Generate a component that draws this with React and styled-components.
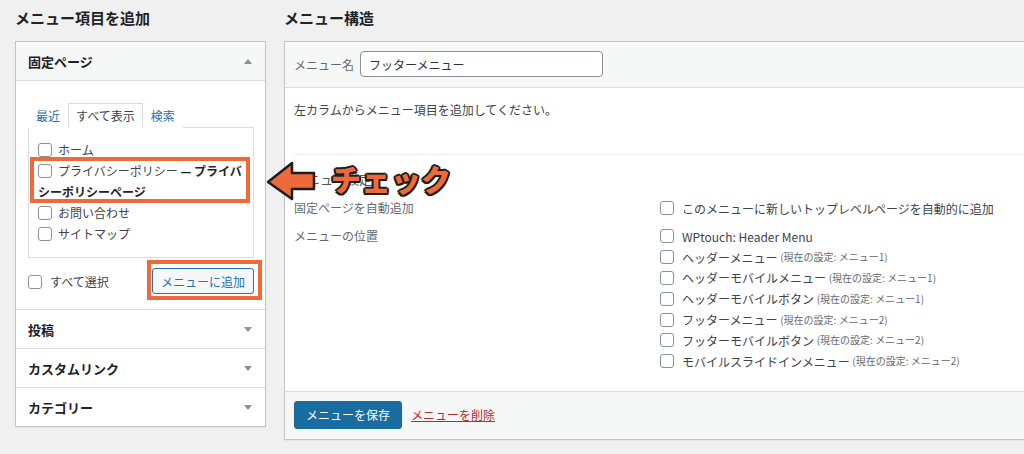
import React from "react";
import styled, { createGlobalStyle } from "styled-components";

const GlobalStyle = createGlobalStyle`
  body {
    margin: 0;
    background: #f0f0f1;
    font-family: "Noto Sans CJK JP", "Noto Sans", sans-serif;
    color: #3c434a;
    overflow: hidden;
  }
`;

const Page = styled.div`
  position: relative;
  display: flex;
  gap: 18px;
  width: 1024px;
  height: 454px;
  padding-left: 15px;
  box-sizing: border-box;
  overflow: hidden;
`;

const Column = styled.div`
  flex: 0 0 ${(p) => p.width}px;
  display: flex;
  flex-direction: column;
`;

const Heading = styled.h2`
  margin: 0;
  height: 41px;
  line-height: 36px;
  font-size: 15px;
  font-weight: 700;
  color: #1d2327;
`;

const Panel = styled.div`
  background: #fff;
  border: 1px solid #c3c4c7;
  box-shadow: 0 1px 1px rgba(0, 0, 0, 0.04);
`;

const AccordionHead = styled.div`
  display: flex;
  align-items: center;
  justify-content: space-between;
  height: 38px;
  padding: 0 13px 0 12px;
  background: ${(p) => (p.open ? "#f6f7f7" : "#fff")};
  border-top: ${(p) => (p.first ? "none" : "1px solid #dcdcde")};
  border-bottom: ${(p) => (p.open ? "1px solid #dcdcde" : "none")};
  font-size: 13px;
  font-weight: 700;
  color: #1d2327;
`;

const Caret = styled.span`
  width: 0;
  height: 0;
  border-left: 4px solid transparent;
  border-right: 4px solid transparent;
  ${(p) =>
    p.up
      ? "border-bottom: 5px solid #8c8f94;"
      : "border-top: 5px solid #8c8f94;"}
`;

const AccordionBody = styled.div`
  padding: 22px 11px 15px 12px;
`;

const Tabs = styled.div`
  display: flex;
  align-items: flex-end;
  position: relative;
  z-index: 1;
  margin-bottom: -1px;
`;

const Tab = styled.span`
  height: 23px;
  line-height: 23px;
  padding: 0 7px;
  font-size: 12px;
  color: ${(p) => (p.active ? "#3c434a" : "#2271b1")};
  border: 1px solid ${(p) => (p.active ? "#dcdcde" : "transparent")};
  border-bottom-color: ${(p) => (p.active ? "#fff" : "transparent")};
  background: #fff;
`;

const TabPanel = styled.div`
  border: 1px solid #dcdcde;
  padding: 11px 9px 13px;
`;

const Item = styled.label`
  display: block;
  line-height: 21px;
  font-size: 12px;
  color: #3c434a;
`;

const Box = styled.input.attrs({ type: "checkbox" })`
  appearance: none;
  width: 14px;
  height: 14px;
  margin: 0 ${(p) => p.$gap || 6}px 0 0;
  border: 1px solid #8c8f94;
  border-radius: 3px;
  background: #fff;
  vertical-align: -2px;
  box-sizing: border-box;
`;

const PostState = styled.b`
  color: #1d2327;
`;

const SelectRow = styled.div`
  display: flex;
  align-items: center;
  justify-content: space-between;
  margin-top: 10px;
  font-size: 12px;
`;

const SecondaryButton = styled.button`
  height: 26px;
  padding: 0 8px;
  font-family: inherit;
  font-size: 12px;
  color: #2271b1;
  background: #f6f7f7;
  border: 1px solid #2271b1;
  border-radius: 3px;
`;

const StructureHead = styled.div`
  display: flex;
  align-items: center;
  gap: 6px;
  padding: 9px 9px 10px;
  background: #f6f7f7;
  border-bottom: 1px solid #dcdcde;
  font-size: 12px;
  color: #646970;
`;

const NameInput = styled.input`
  width: 243px;
  height: 26px;
  padding: 0 8px;
  box-sizing: border-box;
  border: 1px solid #8c8f94;
  border-radius: 4px;
  font-family: inherit;
  font-size: 12px;
  color: #2c3338;
`;

const StructureBody = styled.div`
  padding: 0 9px 19px;
`;

const Instruction = styled.p`
  margin: 12px 0 0;
  line-height: 20px;
  font-size: 12px;
  color: #3c434a;
`;

const Settings = styled.div`
  margin-top: 34px;
  border-top: 1px solid #f0f0f1;
`;

const SettingsTitle = styled.h3`
  margin: 14px 0 9px;
  line-height: 20px;
  font-size: 13px;
  font-weight: 400;
  color: #50575e;
`;

const SettingsGrid = styled.div`
  display: grid;
  grid-template-columns: 366px 1fr;
  row-gap: 8px;
  font-size: 12px;
`;

const SettingLabel = styled.div`
  line-height: 20px;
  color: #646970;
`;

const OptionList = styled.div`
  display: flex;
  flex-direction: column;
`;

const Option = styled.label`
  display: flex;
  align-items: center;
  height: ${(p) => (p.tall ? 20 : 20.8)}px;
  font-size: 12px;
  color: #3c434a;
  white-space: pre;
`;

const Current = styled.span`
  font-size: 10px;
  line-height: 1;
  color: #646970;
`;

const StructureFoot = styled.div`
  display: flex;
  align-items: center;
  gap: 9px;
  padding: 9px 9px 10px;
  background: #f6f7f7;
  border-top: 1px solid #dcdcde;
`;

const PrimaryButton = styled.button`
  height: 28px;
  padding: 0 11px;
  font-family: inherit;
  font-size: 12px;
  color: #fff;
  background: #186c9f;
  border: 1px solid #186c9f;
  border-radius: 3px;
`;

const DeleteLink = styled.a`
  font-size: 12px;
  color: #b32d2e;
  text-decoration: underline;
`;

const Highlight = styled.div`
  position: absolute;
  left: ${(p) => p.x}px;
  top: ${(p) => p.y}px;
  width: ${(p) => p.w}px;
  height: ${(p) => p.h}px;
  border: 4px solid #ef6a3a;
  box-sizing: border-box;
  pointer-events: none;
`;

const ArrowMark = styled.svg`
  position: absolute;
  left: 266px;
  top: 161px;
`;

const CheckNote = styled.div`
  position: absolute;
  left: 331px;
  top: 159px;
  font-size: 30px;
  line-height: 38px;
  font-weight: 900;
  color: #ef6a3a;
  text-shadow: 2px 0 0 #1d1d1d, -2px 0 0 #1d1d1d, 0 2px 0 #1d1d1d,
    0 -2px 0 #1d1d1d, 1.5px 1.5px 0 #1d1d1d, -1.5px 1.5px 0 #1d1d1d,
    1.5px -1.5px 0 #1d1d1d, -1.5px -1.5px 0 #1d1d1d;
`;

const pages = ["ホーム", "privacy", "お問い合わせ", "サイトマップ"];

const locations = [
  ["ヘッダーメニュー", "メニュー1"],
  ["ヘッダーモバイルメニュー", "メニュー1"],
  ["ヘッダーモバイルボタン", "メニュー1"],
  ["フッターメニュー", "メニュー2"],
  ["フッターモバイルボタン", "メニュー2"],
  ["モバイルスライドインメニュー", "メニュー2"],
];

export default function App() {
  return (
    <>
      <GlobalStyle />
      <Page>
        <Column width={251}>
          <Heading>メニュー項目を追加</Heading>
          <Panel>
            <AccordionHead open first>
              固定ページ
              <Caret up />
            </AccordionHead>
            <AccordionBody>
              <Tabs>
                <Tab>最近</Tab>
                <Tab active>すべて表示</Tab>
                <Tab>検索</Tab>
              </Tabs>
              <TabPanel>
                {pages.map((p) =>
                  p === "privacy" ? (
                    <Item key={p}>
                      <Box />
                      プライバシーポリシー
                      <PostState> — プライバシーポリシーページ</PostState>
                    </Item>
                  ) : (
                    <Item key={p}>
                      <Box />
                      {p}
                    </Item>
                  )
                )}
              </TabPanel>
              <SelectRow>
                <Item as="label">
                  <Box $gap={8} />
                  すべて選択
                </Item>
                <SecondaryButton>メニューに追加</SecondaryButton>
              </SelectRow>
            </AccordionBody>
            {["投稿", "カスタムリンク", "カテゴリー"].map((s) => (
              <AccordionHead key={s}>
                {s}
                <Caret />
              </AccordionHead>
            ))}
          </Panel>
        </Column>

        <Column width={760}>
          <Heading>メニュー構造</Heading>
          <Panel>
            <StructureHead>
              メニュー名
              <NameInput defaultValue="フッターメニュー" />
            </StructureHead>
            <StructureBody>
              <Instruction>
                左カラムからメニュー項目を追加してください。
              </Instruction>
              <Settings>
                <SettingsTitle>メニュー設定</SettingsTitle>
                <SettingsGrid>
                  <SettingLabel>固定ページを自動追加</SettingLabel>
                  <Option tall>
                    <Box $gap={8} />
                    このメニューに新しいトップレベルページを自動的に追加
                  </Option>
                  <SettingLabel>メニューの位置</SettingLabel>
                  <OptionList>
                    <Option>
                      <Box $gap={8} />
                      WPtouch: Header Menu
                    </Option>
                    {locations.map(([name, cur]) => (
                      <Option key={name}>
                        <Box $gap={8} />
                        {name} <Current>(現在の設定: {cur})</Current>
                      </Option>
                    ))}
                  </OptionList>
                </SettingsGrid>
              </Settings>
            </StructureBody>
            <StructureFoot>
              <PrimaryButton>メニューを保存</PrimaryButton>
              <DeleteLink href="#">メニューを削除</DeleteLink>
            </StructureFoot>
          </Panel>
        </Column>

        <Highlight x={30} y={157} w={220} h={46} />
        <Highlight x={147} y={260} w={115} h={40} />
        <ArrowMark width="52" height="42" viewBox="0 0 52 42">
          <path
            d="M2 21 L26 2 L26 12 L48 12 L48 28 L26 28 L26 38 Z"
            fill="#ef6a3a"
            stroke="#1d1d1d"
            strokeWidth="2.5"
            strokeLinejoin="round"
          />
        </ArrowMark>
        <CheckNote>チェック</CheckNote>
      </Page>
    </>
  );
}
